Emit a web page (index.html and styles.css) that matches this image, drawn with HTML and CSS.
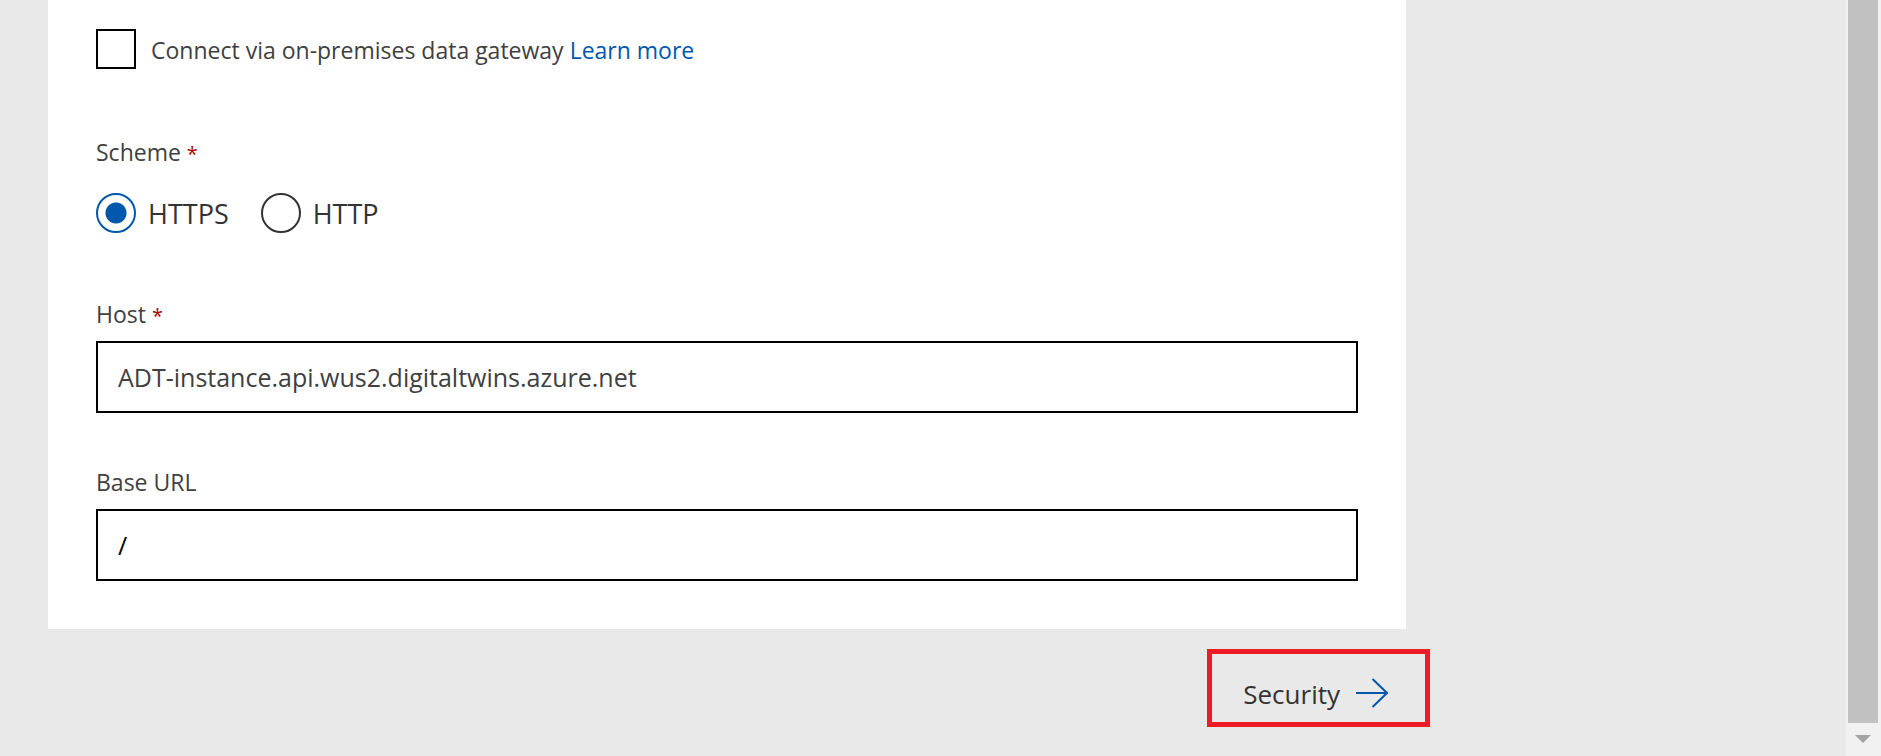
FILE: index.html
```html
<!DOCTYPE html>
<html lang="en">
<head>
<meta charset="utf-8">
<title>General information</title>
<link rel="stylesheet" href="styles.css">
</head>
<body>
<div class="page">
  <form class="main">
    <div class="card">
      <div class="option gateway">
        <input class="checkbox" type="checkbox" id="gateway">
        <span class="label"><label for="gateway">Connect via on-premises data gateway</label> <a class="link" href="#">Learn more</a></span>
      </div>
      <fieldset class="scheme">
        <legend class="label">Scheme <span class="required">*</span></legend>
        <div class="choices">
          <div class="option choice">
            <input class="radio" type="radio" name="scheme" id="https" checked>
            <label for="https">HTTPS</label>
          </div>
          <div class="option choice">
            <input class="radio" type="radio" name="scheme" id="http">
            <label for="http">HTTP</label>
          </div>
        </div>
      </fieldset>
      <div class="field">
        <label class="label" for="host">Host <span class="required">*</span></label>
        <input class="textbox" type="text" id="host" value="ADT-instance.api.wus2.digitaltwins.azure.net">
      </div>
      <div class="field">
        <label class="label" for="base">Base URL</label>
        <input class="textbox base" type="text" id="base" value="/">
      </div>
    </div>
    <div class="footer">
      <button class="next" type="button">Security
        <svg class="arrow" viewBox="0 0 32 32" aria-hidden="true"><path d="M0 15H31M16.500 1L31 15L16.500 29"/></svg>
      </button>
    </div>
  </form>
  <div class="scrollbar" aria-hidden="true">
    <div class="thumb"></div>
    <svg class="down" viewBox="0 0 16 8"><path d="M0 0H16L8 8Z"/></svg>
  </div>
</div>
</body>
</html>
```
FILE: styles.css
```css
* {
  box-sizing: border-box;
}

body {
  margin: 0;
  background: #e9e9e9;
  color: #333;
  font-family: "Segoe UI", "Open Sans", "Noto Sans", sans-serif;
  font-size: 26px;
}

.page {
  display: flex;
  min-height: 100vh;
}

.main {
  flex: 1;
  padding-left: 48px;
}

.card {
  max-width: 1358px;
  padding: 29px 48px 48px;
  background: #fff;
}

.label {
  display: block;
  padding: 0;
  font-size: 23px;
  line-height: 32px;
  color: #404040;
}

.link {
  color: #0058ad;
  text-decoration: none;
}

.required {
  color: #a80000;
  font-size: 20px;
  line-height: 20px;
}

.option {
  display: flex;
  align-items: center;
}

.gateway {
  gap: 15px;
}

.gateway .label {
  padding-top: 2px;
}

.checkbox,
.radio {
  appearance: none;
  flex: none;
  width: 40px;
  height: 40px;
  margin: 0;
  border: 2px solid #000;
  background: #fff;
}

.radio {
  border-color: #333;
  border-radius: 50%;
}

.radio:checked {
  border-color: #0058ad;
  background: radial-gradient(circle, #0058ad 0 10px, #fff 11px);
}

.scheme {
  margin: 67px 0 0;
  padding: 0;
  border: 0;
}

.choices {
  display: flex;
  gap: 32px;
  margin-top: 25px;
  font-size: 27px;
}

.choice {
  gap: 12px;
}

.field {
  margin-top: 53px;
}

.scheme + .field {
  margin-top: 65px;
}

.textbox {
  display: block;
  width: 100%;
  height: 72px;
  margin-top: 11px;
  padding: 0 20px;
  border: 2px solid #000;
  border-radius: 0;
  background: #fff;
  color: #404040;
  font: inherit;
  font-size: 25px;
}

.base {
  color: #000;
}

.footer {
  display: flex;
  justify-content: flex-end;
  max-width: 1382px;
  padding-top: 20px;
}

.next {
  display: flex;
  align-items: center;
  gap: 16px;
  padding: 20px 37px 8px 31px;
  border: 5px solid #ed1c24;
  background: transparent;
  color: #333;
  font: inherit;
  line-height: 40px;
}

.arrow {
  width: 32px;
  height: 32px;
  fill: none;
  stroke: #0058ad;
  stroke-width: 2;
}

.scrollbar {
  display: flex;
  flex-direction: column;
  align-items: center;
  width: 35px;
  padding: 0 3px 13px 2px;
  background: #f1f1f1;
}

.thumb {
  flex: 1;
  width: 100%;
  background: #c1c1c1;
}

.down {
  width: 16px;
  height: 8px;
  margin-top: 12px;
  fill: #a3a3a3;
}
```
